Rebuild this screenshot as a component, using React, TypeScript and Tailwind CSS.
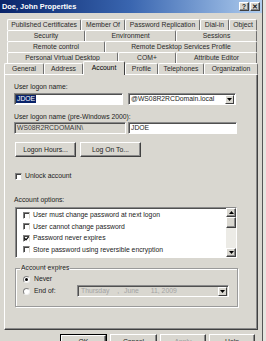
import React from "react";

const FONT = "font-['Liberation_Sans',Arial,sans-serif]";

function Tab({ label, w, active }: { label: string; w: string; active?: boolean }) {
  if (active) {
    return (
      <div
        className={`${w} relative z-10 -mt-[2px] -mb-[1px] h-[14px] flex items-center justify-center border-t border-l border-white border-r border-r-[#404040] rounded-t-[2px] bg-[#d9d7d0] text-black`}
      >
        <span className="-mt-[2px]">{label}</span>
      </div>
    );
  }
  return (
    <div
      className={`${w} h-[11px] flex items-center justify-center border-t border-l border-white border-r border-r-[#6f6f6f] rounded-t-[2px] text-[#2a2a2a]`}
    >
      {label}
    </div>
  );
}

function Sunken({ className, children }: { className: string; children?: React.ReactNode }) {
  return (
    <div
      className={`${className} border border-t-[#8a8a8a] border-l-[#8a8a8a] border-b-white border-r-white shadow-[inset_1px_1px_0_#505050] flex items-center`}
    >
      {children}
    </div>
  );
}

function Btn({ className, children }: { className: string; children?: React.ReactNode }) {
  return (
    <div
      className={`${className} border border-t-white border-l-white border-b-[#404040] border-r-[#404040] shadow-[inset_-1px_-1px_0_#8a8a8a] flex items-center justify-center text-[#1a1a1a]`}
    >
      {children}
    </div>
  );
}

function DropBtn({ className }: { className: string }) {
  return (
    <div
      className={`${className} border border-t-white border-l-white border-b-[#404040] border-r-[#404040] bg-[#d9d7d0] flex items-center justify-center`}
    >
      <svg width="5" height="3" viewBox="0 0 5 3">
        <path d="M0 0 H5 L2.5 3 Z" fill="#000" />
      </svg>
    </div>
  );
}

function Check({ checked }: { checked?: boolean }) {
  return (
    <div className="w-[7px] h-[7px] bg-white border border-t-[#808080] border-l-[#808080] border-b-white border-r-[#d9d7d0] shadow-[inset_1px_1px_0_#404040] flex items-center justify-center shrink-0">
      {checked && (
        <svg width="5" height="5" viewBox="0 0 5 5">
          <path d="M0.5 2.2 L2 3.8 L4.6 0.8" stroke="#000" strokeWidth="1.2" fill="none" />
        </svg>
      )}
    </div>
  );
}

function Radio({ checked }: { checked?: boolean }) {
  return (
    <div className="w-[7px] h-[7px] rounded-full bg-white border border-t-[#808080] border-l-[#808080] border-b-[#f0f0f0] border-r-[#f0f0f0] flex items-center justify-center shrink-0">
      {checked && <div className="w-[3px] h-[3px] rounded-full bg-black" />}
    </div>
  );
}

export default function App() {
  return (
    <div className={`${FONT} w-[266px] h-[341px] overflow-hidden bg-[#e6e4df] text-[6.8px] leading-[8px] text-[#222]`}>
      <div className="w-[263px] h-[341px] bg-[#d9d7d0] border-r border-r-[#555] flex flex-col">
        {/* Title bar */}
        <div className="h-[13px] shrink-0 bg-gradient-to-r from-[#0a246a] via-[#3a66b0] to-[#b0cdee] flex items-center justify-between pl-[2px] pr-[2px]">
          <span className="text-white font-bold text-[7.4px] leading-[9px]">Doe, John Properties</span>
          <div className="flex gap-[1px]">
            <Btn className="w-[10px] h-[9px] bg-[#d9d7d0] font-bold text-[6.5px]">?</Btn>
            <Btn className="w-[10px] h-[9px] bg-[#d9d7d0] font-bold text-[6.5px]">✕</Btn>
          </div>
        </div>

        <div className="flex flex-col pl-[4px] pt-[6px]">
          {/* Tab rows */}
          <div className="flex ml-[3px]">
            <Tab label="Published Certificates" w="w-[74px]" />
            <Tab label="Member Of" w="w-[44px]" />
            <Tab label="Password Replication" w="w-[75px]" />
            <Tab label="Dial-in" w="w-[29px]" />
            <Tab label="Object" w="w-[28px]" />
          </div>
          <div className="flex ml-[3px]">
            <Tab label="Security" w="w-[78px]" />
            <Tab label="Environment" w="w-[91px]" />
            <Tab label="Sessions" w="w-[81px]" />
          </div>
          <div className="flex ml-[3px]">
            <Tab label="Remote control" w="w-[98px]" />
            <Tab label="Remote Desktop Services Profile" w="w-[152px]" />
          </div>
          <div className="flex ml-[3px]">
            <Tab label="Personal Virtual Desktop" w="w-[111px]" />
            <Tab label="COM+" w="w-[58px]" />
            <Tab label="Attribute Editor" w="w-[81px]" />
          </div>
          <div className="flex">
            <Tab label="General" w="w-[40px]" />
            <Tab label="Address" w="w-[39px]" />
            <Tab label="Account" w="w-[42px]" active />
            <Tab label="Profile" w="w-[33px]" />
            <Tab label="Telephones" w="w-[46px]" />
            <Tab label="Organization" w="w-[54px]" />
          </div>

          {/* Panel */}
          <div className="w-[254px] h-[256px] border border-t-white border-l-white border-b-[#404040] border-r-[#404040] shadow-[inset_-1px_-1px_0_#8a8a8a] flex flex-col pl-[9px] pt-[8px]">
            <div>User logon name:</div>
            <div className="flex gap-[5px] mt-[2px]">
              <Sunken className="w-[109px] h-[12px] bg-white pl-[1px]">
                <span className="bg-[#0a246a] text-white px-[1px]">JDOE</span>
              </Sunken>
              <Sunken className="w-[108px] h-[12px] bg-white pl-[2px] pr-[1px] justify-between">
                <span>@WS08R2RCDomain.local</span>
                <DropBtn className="w-[9px] h-[9px]" />
              </Sunken>
            </div>
            <div className="mt-[8px]">User logon name (pre-Windows 2000):</div>
            <div className="flex gap-[2px] mt-[1px]">
              <Sunken className="w-[112px] h-[12px] bg-[#d9d7d0] pl-[2px]">
                <span className="text-[#3a3a3a]">WS08R2RCDOMAIN\</span>
              </Sunken>
              <Sunken className="w-[109px] h-[12px] bg-white pl-[2px]">
                <span>JDOE</span>
              </Sunken>
            </div>
            <div className="flex gap-[4px] mt-[8px] ml-[1px]">
              <Btn className="w-[61px] h-[15px]">Logon Hours...</Btn>
              <Btn className="w-[61px] h-[15px]">Log On To...</Btn>
            </div>
            <div className="flex items-center gap-[3px] mt-[15px] ml-[1px] h-[8px]">
              <Check />
              <span>Unlock account</span>
            </div>
            <div className="mt-[16px]">Account options:</div>
            <Sunken className="w-[222px] h-[51px] bg-white mt-[3px] ml-[1px] items-stretch">
              <div className="flex-1 flex flex-col pl-[7px] pt-[3px] gap-[3.6px]">
                {[
                  ["User must change password at next logon", false],
                  ["User cannot change password", false],
                  ["Password never expires", true],
                  ["Store password using reversible encryption", false],
                ].map(([t, c]) => (
                  <div key={t as string} className="flex items-center gap-[3px] h-[8px] whitespace-nowrap overflow-hidden">
                    <Check checked={c as boolean} />
                    <span>{t as string}</span>
                  </div>
                ))}
              </div>
              <div className="w-[10px] flex flex-col bg-[#ecebe6]">
                <Btn className="w-[10px] h-[9px] bg-[#d9d7d0]">
                  <svg width="5" height="3" viewBox="0 0 5 3">
                    <path d="M0 3 H5 L2.5 0 Z" fill="#000" />
                  </svg>
                </Btn>
                <Btn className="w-[10px] h-[11px] bg-[#d9d7d0]" />
                <div className="flex-1" />
                <Btn className="w-[10px] h-[9px] bg-[#d9d7d0]">
                  <svg width="5" height="3" viewBox="0 0 5 3">
                    <path d="M0 0 H5 L2.5 3 Z" fill="#000" />
                  </svg>
                </Btn>
              </div>
            </Sunken>

            <fieldset className="w-[223px] mt-[6px] ml-[1px] h-[43px] border border-[#9a9a9a] shadow-[1px_1px_0_#fff,inset_1px_1px_0_#fff] px-[7px]">
              <legend className="px-[1px] ml-[-3px]">Account expires</legend>
              <div className="flex items-center gap-[4px] h-[8px] mt-[3px]">
                <Radio checked />
                <span>Never</span>
              </div>
              <div className="flex items-center h-[12px] mt-[2px]">
                <div className="flex items-center gap-[4px] w-[54px]">
                  <Radio />
                  <span>End of:</span>
                </div>
                <Sunken className="w-[152px] h-[12px] bg-[#d9d7d0] pl-[3px] pr-[1px] justify-between">
                  <span className="text-[#a3a3a3]">
                    Thursday <span className="ml-[6px]">,</span> <span className="ml-[3px]">June</span>
                    <span className="ml-[12px]">11, 2009</span>
                  </span>
                  <DropBtn className="w-[9px] h-[9px]" />
                </Sunken>
              </div>
            </fieldset>
          </div>

          {/* Bottom buttons */}
          <div className="flex gap-[3px] mt-[4px] ml-[56px]">
            <div className="border border-black">
              <Btn className="w-[45px] h-[13px]">OK</Btn>
            </div>
            <Btn className="w-[47px] h-[15px]">Cancel</Btn>
            <Btn className="w-[46px] h-[15px] text-[#999]">Apply</Btn>
            <Btn className="w-[46px] h-[15px]">Help</Btn>
          </div>
        </div>
      </div>
    </div>
  );
}
